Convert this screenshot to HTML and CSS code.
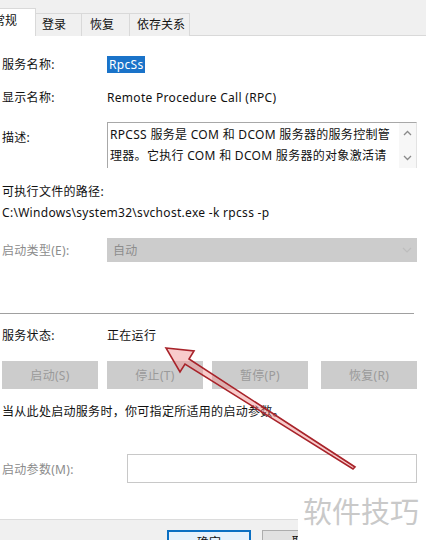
FILE: index.html
```html
<!DOCTYPE html>
<html lang="zh-CN">
<head>
    <meta charset="UTF-8">
    <title>RpcSs 属性</title>
    <link rel="stylesheet" href="styles.css">
</head>
<body>
    <div class="dialog">
        <div class="tabs">
            <div class="tab active">常规</div>
            <div class="tab w46">登录</div>
            <div class="tab w48">恢复</div>
            <div class="tab w60">依存关系</div>
        </div>

        <div class="panel">
            <div class="row name">
                <span class="label">服务名称:</span>
                <span class="value"><span class="selected">RpcSs</span></span>
            </div>
            <div class="row display">
                <span class="label">显示名称:</span>
                <span class="value">Remote Procedure Call (RPC)</span>
            </div>
            <div class="row desc">
                <span class="label">描述:</span>
                <div class="textbox">
                    <div class="textbox-text">RPCSS 服务是 COM 和 DCOM 服务器的服务控制管理器。它执行 COM 和 DCOM 服务器的对象激活请</div>
                    <div class="scroll">
                        <svg width="9" height="6" viewBox="0 0 9 6"><path d="M1 5 L4.5 1.5 L8 5" fill="none" stroke="#8a8a8a" stroke-width="1.3"/></svg>
                        <svg width="9" height="6" viewBox="0 0 9 6"><path d="M1 1 L4.5 4.5 L8 1" fill="none" stroke="#8a8a8a" stroke-width="1.3"/></svg>
                    </div>
                </div>
            </div>
            <div class="path-label">可执行文件的路径:</div>
            <div class="path-value">C:\Windows\system32\svchost.exe -k rpcss -p</div>
            <div class="row startup">
                <span class="label disabled">启动类型(E):</span>
                <div class="select">
                    <span>自动</span>
                    <svg width="10" height="6" viewBox="0 0 10 6"><path d="M1 1 L5 5 L9 1" fill="none" stroke="#bdbdbd" stroke-width="1.2"/></svg>
                </div>
            </div>

            <div class="separator"></div>

            <div class="row status">
                <span class="label">服务状态:</span>
                <span class="value">正在运行</span>
            </div>
            <div class="buttons">
                <div class="btn-disabled">启动(S)</div>
                <div class="btn-disabled">停止(T)</div>
                <div class="btn-disabled">暂停(P)</div>
                <div class="btn-disabled">恢复(R)</div>
            </div>
            <div class="hint">当从此处启动服务时，你可指定所适用的启动参数。</div>
            <div class="row params">
                <span class="label disabled">启动参数(M):</span>
                <div class="input"></div>
            </div>
        </div>

        <div class="footer">
            <div class="btn default">确定</div>
            <div class="btn">取消</div>
        </div>

        <svg class="arrow" width="426" height="540" viewBox="0 0 426 540">
            <polygon points="166,348 194,351 189,359 355,467 353,469 185,364 180,372"
                     fill="rgba(240,140,140,0.45)" stroke="#a8232a" stroke-width="1.6" stroke-linejoin="miter"/>
        </svg>

        <div class="watermark">软件技巧</div>
    </div>
</body>
</html>
```

FILE: styles.css
```css
* {
    margin: 0;
    padding: 0;
    box-sizing: border-box;
}

body {
    font-family: "Noto Sans", "Noto Sans CJK SC", sans-serif;
    font-size: 12px;
    letter-spacing: 0.3px;
    color: #111;
    background: white;
    width: 426px;
    height: 540px;
    overflow: hidden;
}

.dialog {
    position: relative;
    width: 426px;
    height: 540px;
}

/* tab strip */
.tabs {
    height: 36px;
    background: #f0f0f0;
    border-bottom: 1px solid #d9d9d9;
    display: flex;
    align-items: flex-end;
}

.tab {
    height: 23px;
    line-height: 21px;
    padding-left: 6px;
    border: 1px solid #d9d9d9;
    border-bottom: none;
    border-left: none;
    background: #f0f0f0;
    margin-bottom: -1px;
    white-space: nowrap;
    letter-spacing: 0;
}

.tab.active {
    height: 28px;
    line-height: 24px;
    width: 49px;
    margin-left: -13px;
    background: white;
    padding-left: 6px;
}

.w46 { width: 46px; }
.w48 { width: 48px; padding-left: 8px; }
.w60 { width: 60px; padding-left: 7px; }

/* general page */
.panel {
    padding-left: 2px;
    padding-right: 9px;
}

.row {
    display: flex;
    align-items: center;
}

.label {
    width: 105px;
    flex-shrink: 0;
}

.label.disabled {
    color: #8c8c8c;
}

.row.name {
    margin-top: 16px;
    height: 24px;
}

.selected {
    display: inline-block;
    background: #1a73c9;
    color: white;
    padding: 1px 2px;
    line-height: 15px;
}

.row.display {
    margin-top: 9px;
    height: 24px;
}

.row.desc {
    margin-top: 13px;
    align-items: flex-start;
}

.row.desc .label {
    padding-top: 8px;
    line-height: 16px;
}

.textbox {
    flex: 1;
    height: 46px;
    border: 1px solid #a8a8a8;
    border-right-color: #e3e3e3;
    border-bottom: none;
    display: flex;
}

.textbox-text {
    flex: 1;
    padding: 1px 6px 0 2px;
    line-height: 21px;
    overflow: hidden;
}

.scroll {
    width: 17px;
    background: #f7f7f7;
    display: flex;
    flex-direction: column;
    justify-content: space-between;
    align-items: center;
    padding: 7px 0 7px;
}

.path-label {
    margin-top: 16px;
    line-height: 16px;
}

.path-value {
    margin-top: 5px;
    line-height: 16px;
}

.row.startup {
    margin-top: 17px;
}

.select {
    flex: 1;
    height: 24px;
    background: #cccccc;
    color: #8c8c8c;
    display: flex;
    align-items: center;
    justify-content: space-between;
    padding: 0 5px 0 6px;
}

.separator {
    margin-top: 51px;
    border-top: 1px solid #a0a0a0;
    margin-right: 3px;
    margin-left: -2px;
}

.row.status {
    margin-top: 14px;
    line-height: 16px;
}

.buttons {
    margin-top: 17px;
    display: flex;
    gap: 9px;
}

.btn-disabled {
    width: 96px;
    height: 28px;
    background: #cccccc;
    color: #9a9a9a;
    display: flex;
    align-items: center;
    justify-content: center;
}

.btn-disabled:last-child {
    margin-left: 4px;
}

.hint {
    margin-top: 15px;
    line-height: 16px;
}

.row.params {
    margin-top: 34px;
}

.row.params .label {
    width: 125px;
}

.input {
    flex: 1;
    height: 29px;
    border: 1px solid #c8c8c8;
}

/* bottom bar */
.footer {
    margin-top: 36px;
    height: 30px;
    background: #f0f0f0;
    border-top: 1px solid #dcdcdc;
    display: flex;
    padding: 10px 0 0 167px;
    gap: 11px;
}

.btn {
    width: 84px;
    height: 24px;
    border: 1px solid #adadad;
    background: #e1e1e1;
    text-align: center;
    line-height: 22px;
}

.btn.default {
    border: 2px solid #0a6fc2;
    background: #e5f1fb;
}

/* overlays */
.arrow {
    position: absolute;
    top: 0;
    left: 0;
    pointer-events: none;
}

.watermark {
    position: absolute;
    left: 298px;
    top: 483px;
    width: 128px;
    height: 57px;
    background: white;
    color: #c9c9c9;
    font-size: 29px;
    line-height: 57px;
    padding-left: 5px;
    letter-spacing: 0;
}
```
